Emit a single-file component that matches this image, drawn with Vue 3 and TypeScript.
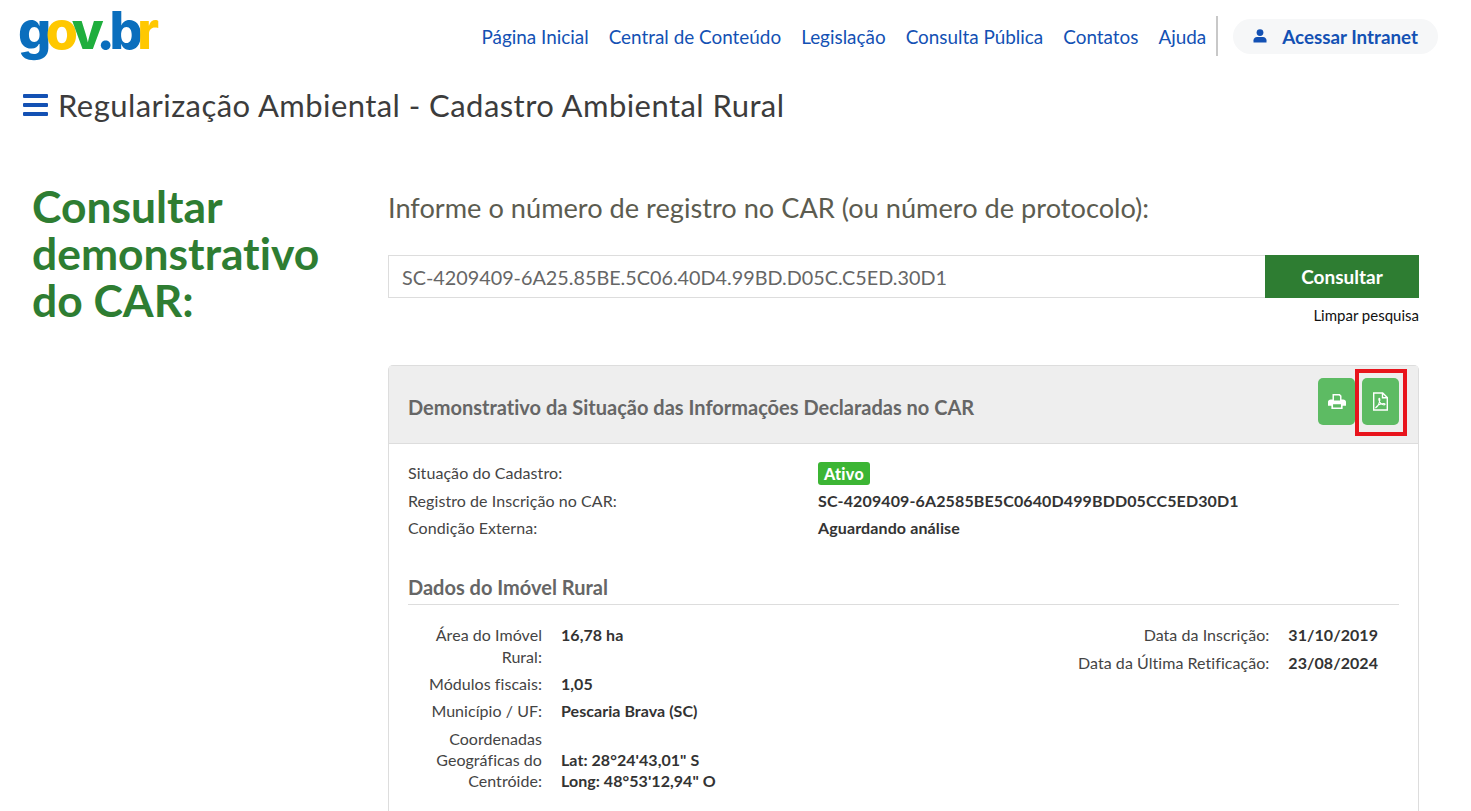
<script setup lang="ts">
const navItems: string[] = ['Página Inicial', 'Central de Conteúdo', 'Legislação', 'Consulta Pública', 'Contatos', 'Ajuda']
const leftRows = [
  { label: 'Área do Imóvel Rural:', value: ['16,78 ha'], cls: 'r-area' },
  { label: 'Módulos fiscais:', value: ['1,05'], cls: 'r-mod' },
  { label: 'Município / UF:', value: ['Pescaria Brava (SC)'], cls: 'r-mun' },
  { label: 'Coordenadas Geográficas do Centróide:', value: ['Lat: 28°24\'43,01" S', 'Long: 48°53\'12,94" O'], cls: 'r-coord' },
]
const rightRows = [
  { label: 'Data da Inscrição:', value: '31/10/2019' },
  { label: 'Data da Última Retificação:', value: '23/08/2024' },
]
</script>

<template>
  <div class="page">
    <header class="topbar">
      <div class="logo" aria-label="gov.br"><span class="b">g</span><span class="y">o</span><span class="g">v</span><span class="b">.b</span><span class="y">r</span></div>
      <nav class="nav">
        <a v-for="item in navItems" :key="item" class="nav-link">{{ item }}</a>
        <span class="divider"></span>
        <a class="intranet">
          <svg width="16" height="16" viewBox="0 0 16 16"><circle cx="8" cy="4.6" r="3.4" fill="#1351b4"/><path d="M1.500 14.500v-2.200c0-2 1.600-3.300 3.500-3.300h6c1.900 0 3.500 1.300 3.500 3.300v2.200z" fill="#1351b4"/></svg>
          <span>Acessar Intranet</span>
        </a>
      </nav>
    </header>

    <div class="subtitle">
      <span class="burger"><i></i><i></i><i></i></span>
      <span class="subtitle-text">Regularização Ambiental - Cadastro Ambiental Rural</span>
    </div>

    <main class="content">
      <h1 class="heading">Consultar demonstrativo do CAR:</h1>
      <section class="right">
        <h2 class="prompt">Informe o número de registro no CAR (ou número de protocolo):</h2>
        <div class="search">
          <div class="input">SC-4209409-6A25.85BE.5C06.40D4.99BD.D05C.C5ED.30D1</div>
          <button class="submit">Consultar</button>
        </div>
        <div class="clear"><a>Limpar pesquisa</a></div>

        <article class="card">
          <div class="card-head">
            <h3>Demonstrativo da Situação das Informações Declaradas no CAR</h3>
            <div class="actions">
              <button class="icon-btn">
                <svg width="18" height="17" viewBox="0 0 16 16" preserveAspectRatio="none"><path fill="#fff" fill-rule="evenodd" d="M4 1h6.500L12 2.500V6h1.500C14.900 6 16 7 16 8.300V12h-3v3H3v-3H0V8.300C0 7 1.100 6 2.500 6H4zm1.300 1.300V7h5.400V3.300L9.800 2.300zM4.500 10.500v3.200h7v-3.200z"/></svg>
              </button>
              <button class="icon-btn">
                <svg width="17" height="19" viewBox="0 0 17 19"><path fill="none" stroke="#fff" stroke-width="1.400" d="M1.700 1h9l4.600 4.600V18H1.700zM10.500 1v4.800h4.800"/><path fill="none" stroke="#fff" stroke-width="1.100" d="M3.500 16c1.800-1 3.600-4 4.300-7.600.2-1.300-.1-2-.5-2-.5 0-.6 1-.2 2.200.7 2.200 2.400 3.800 4.200 4.200 1 .2 1.900 0 1.800-.6-.1-.6-1.500-.7-3-.5-2.400.3-4.900 1.600-6.600 4.300z"/></svg>
              </button>
            </div>
          </div>
          <div class="card-body">
            <dl class="status">
              <dt>Situação do Cadastro:</dt><dd><span class="badge">Ativo</span></dd>
              <dt>Registro de Inscrição no CAR:</dt><dd>SC-4209409-6A2585BE5C0640D499BDD05CC5ED30D1</dd>
              <dt>Condição Externa:</dt><dd>Aguardando análise</dd>
            </dl>
            <h4 class="section">Dados do Imóvel Rural</h4>
            <div class="columns">
              <div class="col-left">
                <div v-for="r in leftRows" :key="r.label" class="row" :class="r.cls">
                  <div class="lbl">{{ r.label }}</div>
                  <div class="val"><div v-for="v in r.value" :key="v">{{ v }}</div></div>
                </div>
              </div>
              <div class="col-right">
                <div v-for="r in rightRows" :key="r.label" class="row2">
                  <div class="lbl">{{ r.label }}</div>
                  <div class="val">{{ r.value }}</div>
                </div>
              </div>
            </div>
          </div>
        </article>
      </section>
    </main>
    <div class="highlight"></div>
  </div>
</template>

<style>
html, body { margin: 0; background: #fff; overflow: hidden; }
</style>

<style scoped>
.page { position: relative; width: 1471px; height: 811px; overflow: hidden; background: #fff; font-family: Lato, "Open Sans", sans-serif; color: #333; font-variant-ligatures: none; }
.topbar { height: 74px; display: flex; justify-content: space-between; align-items: flex-start; padding: 0 33px 0 18px; }
.logo { font-family: Inter, sans-serif; font-weight: 800; font-size: 52px; line-height: 60px; letter-spacing: -5.4px; margin-top: 1px; white-space: nowrap; }
.b { color: #0a6ebd; }
.y { color: #ffc800; }
.g { color: #1fae3d; }
.nav { display: flex; align-items: center; height: 38px; margin-top: 17px; }
.nav-link { font-family: Lato, sans-serif; font-size: 18.9px; color: #1351b4; margin-right: 20px; white-space: nowrap; margin-top: 1px; }
.nav-link:nth-child(6) { margin-right: 10px; }
.divider { width: 2px; height: 40px; background: #c8c8c8; margin-right: 15px; }
.intranet { display: flex; align-items: center; gap: 14px; height: 35px; padding: 0 20px 0 19px; background: #f6f7f8; border-radius: 18px; color: #1351b4; font-family: Lato, sans-serif; font-weight: 700; font-size: 18.8px; white-space: nowrap; }
.subtitle { display: flex; align-items: center; gap: 10px; padding-left: 23px; height: 40px; margin-top: 11px; }
.burger { display: flex; flex-direction: column; gap: 5.500px; width: 25px; }
.burger i { display: block; height: 3.500px; background: #1351b4; border-radius: 1px; }
.subtitle-text { font-family: Lato, sans-serif; font-size: 31px; font-weight: 400; color: #3c3c3c; white-space: nowrap; letter-spacing: .44px; }
.content { display: flex; padding: 0 52px 0 32px; margin-top: 63px; }
.heading { width: 356px; flex: none; margin: 0 0 0 0; font-size: 44.4px; line-height: 47px; font-weight: 700; color: #2e7d32; padding-right: 30px; box-sizing: border-box; margin-top: -6px; text-indent: 0; }
.right { flex: 1; min-width: 0; }
.prompt { margin: 0; font-size: 27.2px; line-height: 36px; font-weight: 400; color: #5c5c50; margin-top: 2px; }
.search { display: flex; height: 43px; margin-top: 29px; }
.input { flex: 1; box-sizing: border-box; border: 1px solid #ddd; border-right: 0; padding: 0 13px; font-size: 19.8px; line-height: 43px; color: #666; }
.submit { width: 154px; border: 0; background: #2e7d32; color: #fff; font: 700 19px Lato, sans-serif; }
.clear { text-align: right; font-size: 15px; line-height: 18px; color: #111; margin-top: 8px; }
.card { margin-top: 41px; border: 1px solid #ddd; border-bottom: 0; border-radius: 5px 5px 0 0; min-height: 500px; }
.card-head { height: 77px; background: #eee; border-bottom: 1px solid #ddd; display: flex; justify-content: space-between; padding: 0 19px; }
.card-head h3 { margin: 0; font-size: 20px; font-weight: 700; color: #666; line-height: 24px; margin-top: 29px; }
.actions { display: flex; gap: 7px; padding-top: 12px; }
.icon-btn { width: 37px; height: 47px; border: 0; border-radius: 5px; background: #5dbb63; display: flex; align-items: center; justify-content: center; padding: 0; }
.card-body { padding: 15px 19px 0; font-size: 16px; }
.status { display: grid; grid-template-columns: 410px 1fr; grid-template-rows: 28px 27px 27px; margin: 0; align-items: center; }
.status dt { color: #444; letter-spacing: .07px; }
.status dd { margin: 0; font-weight: 700; color: #333; letter-spacing: .12px; }
.status dt:first-child { margin-top: -2px; }
.badge { display: inline-block; background: #3cb534; color: #fff; padding: 0 6px; border-radius: 3px; line-height: 23px; font-weight: 900; margin-top: 1px; letter-spacing: .3px; }
.section { margin: 33px 0 0; font-size: 20px; font-weight: 700; color: #666; line-height: 26px; padding-bottom: 4px; border-bottom: 1px solid #ddd; }
.columns { display: flex; justify-content: space-between; padding-top: 19px; }
.col-left { width: 330px; }
.row { display: flex; gap: 19px; line-height: 22px; margin-bottom: 5px; }
.lbl { color: #444; text-align: right; letter-spacing: .05px; }
.val { font-weight: 700; color: #333; letter-spacing: .05px; }
.row .lbl { width: 134px; flex: none; }
.r-coord { line-height: 21px; margin-top: 6px; }
.r-coord .val { padding-top: 21px; }
.col-right { padding-right: 21px; }
.row2 { display: flex; justify-content: flex-end; gap: 19px; line-height: 22px; margin-bottom: 6px; }
.highlight { position: absolute; left: 1355px; top: 369px; width: 52px; height: 67px; box-sizing: border-box; border: 4px solid #e8141c; }
</style>
